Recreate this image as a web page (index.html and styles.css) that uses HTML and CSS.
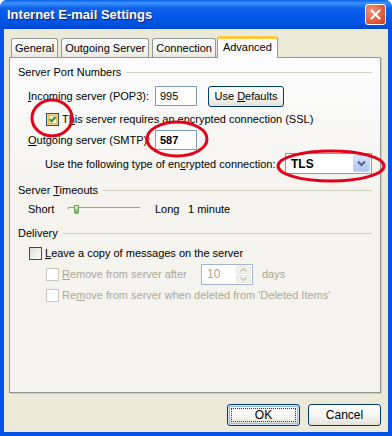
FILE: index.html
```html
<!DOCTYPE html>
<html lang="en">
<head>
    <meta charset="UTF-8">
    <title>Internet E-mail Settings</title>
    <link rel="stylesheet" href="styles.css">
</head>
<body>
    <div class="window">
        <!-- Title bar -->
        <div class="titlebar">
            <span class="title">Internet E-mail Settings</span>
            <span class="close">
                <svg width="11" height="11" viewBox="0 0 11 11"><path d="M1.5 1.5 L9.5 9.5 M9.5 1.5 L1.5 9.5" stroke="#fff" stroke-width="2" stroke-linecap="round"/></svg>
            </span>
        </div>

        <div class="client">
            <!-- Tabs -->
            <div class="tabs">
                <div class="tab">General</div>
                <div class="tab">Outgoing Server</div>
                <div class="tab">Connection</div>
                <div class="tab active">Advanced</div>
            </div>

            <div class="panel">
                <div class="group"><span>Server Port Numbers</span></div>

                <div class="row incoming">
                    <span class="label"><u>I</u>ncoming server (POP3):</span>
                    <span class="field port">995</span>
                    <span class="btn defaults"><span>Use <u>D</u>efaults</span></span>
                </div>

                <div class="row ssl">
                    <span class="cb checked hot">
                        <svg width="11" height="11" viewBox="0 0 11 11"><path d="M2.5 5 L4.5 7.5 L8.5 3" fill="none" stroke="#21a121" stroke-width="2"/></svg>
                    </span>
                    <span>T<u>h</u>is server requires an encrypted connection (SSL)</span>
                </div>

                <div class="row outgoing">
                    <span class="label"><u>O</u>utgoing server (SMTP):</span>
                    <span class="field port bold">587</span>
                </div>

                <div class="row encrypt">
                    <span>Use the following type of en<u>c</u>rypted connection:</span>
                    <span class="select">
                        <span class="value">TLS</span>
                        <span class="drop">
                            <svg width="9" height="7" viewBox="0 0 9 7"><path d="M1 1.5 L4.5 5 L8 1.5" fill="none" stroke="#4d6185" stroke-width="2"/></svg>
                        </span>
                    </span>
                </div>

                <div class="group timeouts"><span>Server <u>T</u>imeouts</span></div>

                <div class="row slider-row">
                    <span class="short">Short</span>
                    <span class="slider">
                        <span class="track"></span>
                        <span class="thumb"></span>
                    </span>
                    <span class="long">Long</span>
                    <span>1 minute</span>
                </div>

                <div class="group delivery"><span>Delivery</span></div>

                <div class="row leave">
                    <span class="cb"></span>
                    <span><u>L</u>eave a copy of messages on the server</span>
                </div>

                <div class="row sub disabled">
                    <span class="cb off"></span>
                    <span class="after-label"><u>R</u>emove from server after</span>
                    <span class="spin">
                        <span class="spin-value">10</span>
                        <span class="spin-btns">
                            <span class="spin-btn">
                                <svg width="7" height="4" viewBox="0 0 7 4"><path d="M0.5 3.5 L3.5 0.5 L6.5 3.5" fill="none" stroke="#c9c7ba" stroke-width="1.5"/></svg>
                            </span>
                            <span class="spin-btn">
                                <svg width="7" height="4" viewBox="0 0 7 4"><path d="M0.5 0.5 L3.5 3.5 L6.5 0.5" fill="none" stroke="#c9c7ba" stroke-width="1.5"/></svg>
                            </span>
                        </span>
                    </span>
                    <span class="days">days</span>
                </div>

                <div class="row sub disabled">
                    <span class="cb off"></span>
                    <span>Re<u>m</u>ove from server when deleted from 'Deleted Items'</span>
                </div>
            </div>

            <!-- Dialog buttons -->
            <div class="buttons">
                <span class="btn dialog default">OK</span>
                <span class="btn dialog">Cancel</span>
            </div>
        </div>

        <!-- Red marks drawn over the dialog -->
        <svg class="marks" width="392" height="436" viewBox="0 0 392 436">
            <ellipse cx="52" cy="118" rx="20" ry="18" />
            <ellipse cx="177" cy="139" rx="30" ry="17" />
            <ellipse cx="331" cy="166" rx="53" ry="15" />
        </svg>
    </div>
</body>
</html>
```

FILE: styles.css
```css
* {
    margin: 0;
    padding: 0;
    box-sizing: border-box;
}
body {
    font-family: "Liberation Sans", Arial, sans-serif;
    font-size: 11px;
    color: #000;
    background: #fff;
}
u {
    text-decoration: underline;
    text-underline-offset: 1px;
}
.window {
    position: relative;
    width: 392px;
    height: 436px;
    background: #0553e6;
    border-radius: 7px 7px 0 0;
    display: flex;
    flex-direction: column;
    overflow: hidden;
}
/* ============= Title bar ========= */
.titlebar {
    height: 29px;
    flex-shrink: 0;
    display: flex;
    align-items: center;
    padding: 0 6px 0 7px;
    background: linear-gradient(#0a5fe8 0, #3d95ff 3px, #0e62ea 8px, #0058e6 18px, #0050dd 26px, #0047d3 29px);
}
.title {
    flex: 1;
    color: #fff;
    font-weight: bold;
    font-size: 13px;
    text-shadow: 1px 1px 0 #0f1f6e;
}
.close {
    width: 21px;
    height: 21px;
    border: 1px solid #fff;
    border-radius: 3px;
    background: radial-gradient(circle at 30% 30%, #f0937a, #e25b3b 60%, #c7391a);
    display: flex;
    align-items: center;
    justify-content: center;
}
/* ============= Client area ========= */
.client {
    flex: 1;
    margin: 0 4px 4px 4px;
    background: #ece9d8;
    padding: 7px 7px 0 5px;
    display: flex;
    flex-direction: column;
}
.tabs {
    display: flex;
    align-items: flex-end;
    height: 21px;
    padding-left: 2px;
    position: relative;
    z-index: 1;
}
.tab {
    height: 19px;
    padding: 0 3px;
    margin-right: 3px;
    border: 1px solid #919b9c;
    border-bottom: none;
    border-radius: 3px 3px 0 0;
    background: linear-gradient(#fefefe, #f4f3ee 70%, #e9e7df);
    display: flex;
    align-items: center;
    white-space: nowrap;
}
.tab.active {
    height: 22px;
    margin: 0 0 -1px -2px;
    padding: 0 5px 3px 5px;
    background: #fcfcfe;
    border-top: 3px solid #ffc83c;
    border-radius: 3px 3px 0 0;
}
.panel {
    height: 336px;
    border: 1px solid #919b9c;
    border-right-color: #8d9596;
    border-bottom-color: #8d9596;
    background: linear-gradient(#fcfcfe, #f4f3ee 40%);
    box-shadow: 1px 1px 0 #d0cebf;
    padding: 6px 8px 0 8px;
    display: flex;
    flex-direction: column;
}
.group {
    height: 16px;
    display: flex;
    align-items: center;
    white-space: nowrap;
}
.group::after {
    content: "";
    flex: 1;
    border-top: 1px solid #d0d0bf;
    margin-left: 5px;
}
.group.timeouts {
    margin-top: 8px;
}
.group.delivery {
    margin-top: 6px;
}
.row {
    height: 20px;
    display: flex;
    align-items: center;
    white-space: nowrap;
}
.label {
    width: 127px;
}
.incoming {
    margin-top: 6px;
    padding-left: 10px;
}
.ssl {
    margin-top: 3px;
    padding-left: 28px;
}
.outgoing {
    margin-top: 1px;
    padding-left: 10px;
}
.encrypt {
    margin-top: 3px;
    padding-left: 27px;
    height: 21px;
}
.slider-row {
    margin-top: 1px;
    padding-left: 10px;
}
.leave {
    margin-top: 2px;
    padding-left: 11px;
}
.sub {
    margin-top: 1px;
    padding-left: 28px;
}
.disabled {
    color: #aca899;
}
/* ============= Controls ========= */
.field {
    height: 20px;
    border: 1px solid #7f9db9;
    background: #fff;
    display: flex;
    align-items: center;
    padding-left: 4px;
}
.port {
    width: 42px;
}
.bold {
    font-weight: bold;
}
.btn {
    height: 21px;
    border: 1px solid #003c74;
    border-radius: 3px;
    background: linear-gradient(#fff, #f4f4f0 60%, #e3e1d5);
    display: flex;
    align-items: center;
    justify-content: center;
}
.defaults {
    width: 76px;
    margin-left: 11px;
}
.cb {
    width: 13px;
    height: 13px;
    border: 1px solid #1c5180;
    background: linear-gradient(135deg, #dcdcd7, #fff);
    margin-right: 3px;
    display: flex;
    align-items: center;
    justify-content: center;
    flex-shrink: 0;
}
.cb.hot {
    box-shadow: inset 0 0 0 1px #fcd28b, inset 0 0 0 2px #f8b43f;
}
.cb.off {
    border-color: #cac8bb;
    background: #fff;
}
.select {
    margin-left: auto;
    width: 87px;
    height: 21px;
    border: 1px solid #7f9db9;
    background: #fff;
    display: flex;
    align-items: stretch;
    padding: 1px;
}
.select .value {
    flex: 1;
    font-weight: bold;
    font-size: 12px;
    display: flex;
    align-items: center;
    padding-left: 4px;
}
.drop {
    width: 17px;
    border-radius: 2px;
    background: linear-gradient(#dbe6fe, #c1d3fb 50%, #b0c5f5);
    border: 1px solid #c3d3fd;
    display: flex;
    align-items: center;
    justify-content: center;
}
.short {
    width: 40px;
}
.slider {
    position: relative;
    width: 72px;
    height: 12px;
}
.track {
    position: absolute;
    left: 0;
    right: 0;
    top: 4px;
    height: 3px;
    border-top: 1px solid #9d9c99;
    border-bottom: 1px solid #fff;
    background: #f0efe8;
    border-left: 1px solid #9d9c99;
}
.thumb {
    position: absolute;
    left: 6px;
    top: 2px;
    width: 5px;
    height: 9px;
    border: 1px solid #6e9c5c;
    border-radius: 1px 1px 3px 3px;
    background: linear-gradient(#e6f5e0, #5bb84a);
}
.long {
    margin-left: 15px;
    width: 33px;
}
.after-label {
    width: 139px;
}
.spin {
    width: 52px;
    height: 21px;
    border: 1px solid #9fb5cd;
    background: #fff;
    display: flex;
    align-items: stretch;
    padding: 1px;
}
.spin-value {
    flex: 1;
    padding-left: 4px;
    display: flex;
    align-items: center;
    font-size: 12px;
}
.spin-btns {
    width: 15px;
    display: flex;
    flex-direction: column;
    gap: 1px;
}
.spin-btn {
    flex: 1;
    border: 1px solid #e8e6dc;
    border-radius: 2px;
    background: #f2f1ea;
    display: flex;
    align-items: center;
    justify-content: center;
}
.days {
    margin-left: 9px;
}
.buttons {
    display: flex;
    justify-content: flex-end;
    gap: 8px;
    margin-top: 11px;
}
.dialog {
    width: 73px;
    height: 22px;
    font-size: 12px;
    position: relative;
}
.default {
    box-shadow: inset 0 0 0 1px #cee7ff, inset 0 0 0 2px #98b8ea;
}
.default::after {
    content: "";
    position: absolute;
    inset: 3px;
    border: 1px dotted #333;
}
/* ============= Overlay marks ========= */
.marks {
    position: absolute;
    left: 0;
    top: 0;
    pointer-events: none;
}
.marks ellipse {
    fill: none;
    stroke: #e3001a;
    stroke-width: 3;
}
```
